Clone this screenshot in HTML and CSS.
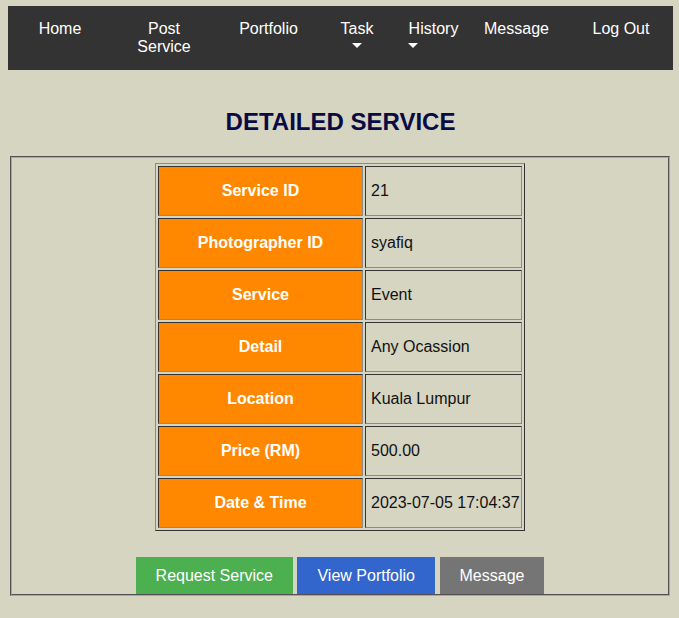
FILE: index.html
```html
<!DOCTYPE html>
<html>
<head>
<meta charset="utf-8">
<title>Detailed Service</title>
<link rel="stylesheet" href="styles.css">
</head>
<body>
<div class="page">
  <nav class="navbar">
    <a class="nav-item" href="#">Home</a>
    <a class="nav-item" href="#">Post<br>Service</a>
    <a class="nav-item" href="#">Portfolio</a>
    <div class="nav-item dropdown">
      <span>Task</span>
      <span class="caret"></span>
    </div>
    <div class="nav-item dropdown dropdown-left">
      <span>History</span>
      <span class="caret"></span>
    </div>
    <a class="nav-item" href="#">Message</a>
    <a class="nav-item nav-logout" href="#">Log Out</a>
  </nav>

  <h1 class="title">DETAILED SERVICE</h1>

  <div class="panel">
    <table class="detail">
      <tr><th>Service ID</th><td>21</td></tr>
      <tr><th>Photographer ID</th><td>syafiq</td></tr>
      <tr><th>Service</th><td>Event</td></tr>
      <tr><th>Detail</th><td>Any Ocassion</td></tr>
      <tr><th>Location</th><td>Kuala Lumpur</td></tr>
      <tr><th>Price (RM)</th><td>500.00</td></tr>
      <tr><th>Date &amp; Time</th><td>2023-07-05 17:04:37</td></tr>
    </table>
    <div class="actions">
      <a class="btn btn-green" href="#">Request Service</a>
      <a class="btn btn-blue" href="#">View Portfolio</a>
      <a class="btn btn-gray" href="#">Message</a>
    </div>
  </div>
</div>
</body>
</html>
```

FILE: styles.css
```css
html, body {
  margin: 0;
  padding: 0;
}
body {
  background: #d6d5c2;
  font-family: "Liberation Sans", Arial, sans-serif;
  font-size: 16px;
  color: #111;
}
.page {
  padding: 6px 6px 0 8px;
}
.navbar {
  background: #333333;
  height: 64px;
  box-sizing: border-box;
  padding-top: 14px;
  display: grid;
  grid-template-columns: 104px 104px 105px 72px 81px 85px 1fr;
  align-items: start;
}
.nav-item {
  color: #ffffff;
  text-decoration: none;
  text-align: center;
  line-height: 18px;
}
.nav-logout {
  padding-left: 10px;
}
.dropdown {
  display: flex;
  flex-direction: column;
  align-items: center;
}
.dropdown-left .caret {
  margin-right: 41px;
}
.caret {
  display: block;
  width: 0;
  height: 0;
  border-left: 5px solid transparent;
  border-right: 5px solid transparent;
  border-top: 5px solid #ffffff;
  margin-top: 5px;
}
.title {
  margin: 38px 0 20px;
  text-align: center;
  font-size: 24px;
  line-height: 28px;
  font-weight: bold;
  color: #0a0a45;
}
.panel {
  margin: 0 3px 0 2px;
  border: 2px groove #a6a6a6;
  padding-top: 5px;
  display: flex;
  flex-direction: column;
  align-items: center;
}
.detail {
  width: 370px;
  table-layout: fixed;
  border-collapse: separate;
  border-spacing: 2px;
  border: 1px solid;
  border-color: #8a8a8a #333333 #333333 #8a8a8a;
}
.detail th,
.detail td {
  border: 1px solid;
  border-color: #333333 #8a8a8a #8a8a8a #333333;
  padding: 15px 5px;
  line-height: 18px;
  font-size: 16px;
  white-space: nowrap;
}
.detail th {
  width: 193px;
  background: #ff8800;
  color: #ffffff;
  font-weight: bold;
  text-align: center;
}
.detail td {
  text-align: left;
  color: #111;
}
.actions {
  display: flex;
  justify-content: center;
  gap: 4.5px;
  margin-top: 26px;
}
.btn {
  display: block;
  padding: 9px 20px;
  line-height: 19px;
  color: #ffffff;
  text-decoration: none;
  font-size: 16px;
}
.btn-green { background: #4caf50; }
.btn-blue { background: #3366cc; }
.btn-gray { background: #757575; }
```
